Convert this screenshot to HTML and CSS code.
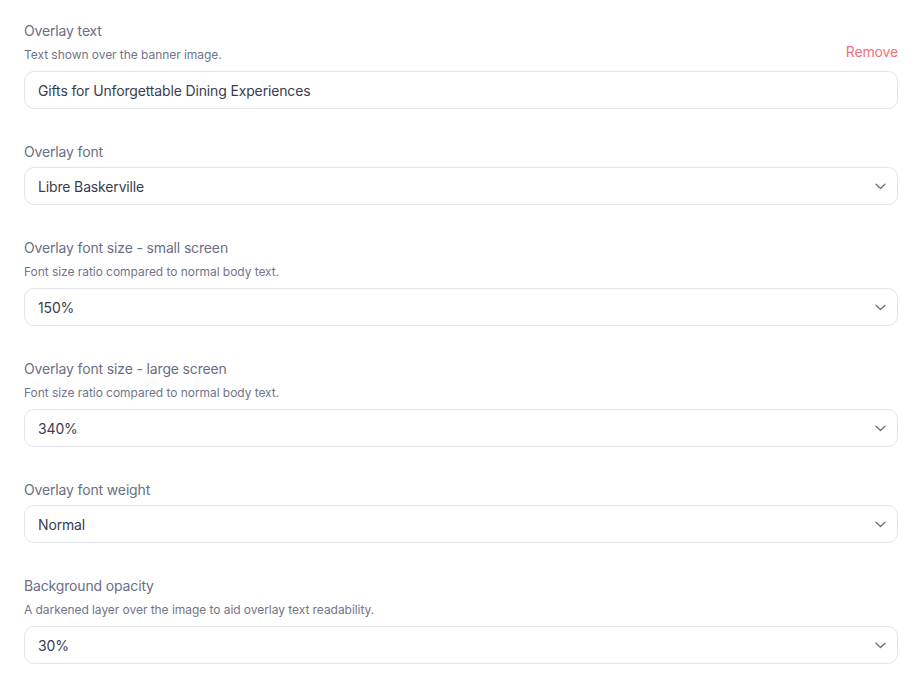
FILE: index.html
```html
<!DOCTYPE html>
<html lang="en">
<head>
<meta charset="utf-8">
<title>Overlay settings</title>
<link rel="stylesheet" href="styles.css">
</head>
<body>
<div class="form">
  <div class="field">
    <div class="field-head">
      <div class="head-text">
        <div class="label">Overlay text</div>
        <div class="desc">Text shown over the banner image.</div>
      </div>
      <button class="remove" type="button">Remove</button>
    </div>
    <div class="control">Gifts for Unforgettable Dining Experiences</div>
  </div>

  <div class="field">
    <div class="label">Overlay font</div>
    <div class="control select">Libre Baskerville
      <svg class="chev" width="11" height="7" viewBox="0 0 11 7"><path d="M1 1.2l4.5 4.3L10 1.2" fill="none" stroke="#6e7084" stroke-width="1.3" stroke-linecap="round" stroke-linejoin="round"/></svg>
    </div>
  </div>

  <div class="field">
    <div class="label">Overlay font size - small screen</div>
    <div class="desc">Font size ratio compared to normal body text.</div>
    <div class="control select">150%
      <svg class="chev" width="11" height="7" viewBox="0 0 11 7"><path d="M1 1.2l4.5 4.3L10 1.2" fill="none" stroke="#6e7084" stroke-width="1.3" stroke-linecap="round" stroke-linejoin="round"/></svg>
    </div>
  </div>

  <div class="field">
    <div class="label">Overlay font size - large screen</div>
    <div class="desc">Font size ratio compared to normal body text.</div>
    <div class="control select">340%
      <svg class="chev" width="11" height="7" viewBox="0 0 11 7"><path d="M1 1.2l4.5 4.3L10 1.2" fill="none" stroke="#6e7084" stroke-width="1.3" stroke-linecap="round" stroke-linejoin="round"/></svg>
    </div>
  </div>

  <div class="field">
    <div class="label">Overlay font weight</div>
    <div class="control select">Normal
      <svg class="chev" width="11" height="7" viewBox="0 0 11 7"><path d="M1 1.2l4.5 4.3L10 1.2" fill="none" stroke="#6e7084" stroke-width="1.3" stroke-linecap="round" stroke-linejoin="round"/></svg>
    </div>
  </div>

  <div class="field">
    <div class="label">Background opacity</div>
    <div class="desc">A darkened layer over the image to aid overlay text readability.</div>
    <div class="control select">30%
      <svg class="chev" width="11" height="7" viewBox="0 0 11 7"><path d="M1 1.2l4.5 4.3L10 1.2" fill="none" stroke="#6e7084" stroke-width="1.3" stroke-linecap="round" stroke-linejoin="round"/></svg>
    </div>
  </div>
</div>
</body>
</html>
```
FILE: styles.css
```css
* { box-sizing: border-box; }
html, body { margin: 0; padding: 0; background: #ffffff; }
body {
  font-family: Inter, "Noto Sans", "Liberation Sans", sans-serif;
  color: #3a3c50;
}
.form {
  display: flex;
  flex-direction: column;
  gap: 33px;
  padding: 21px 22px 0 24px;
}
.field {
  display: flex;
  flex-direction: column;
}
.field-head {
  display: flex;
  align-items: flex-end;
  justify-content: space-between;
}
.head-text {
  display: flex;
  flex-direction: column;
}
.label {
  font-size: 14px;
  line-height: 20px;
  color: #6b6e85;
  margin-bottom: 5px;
  letter-spacing: -0.15px;
}
.desc {
  font-size: 12px;
  line-height: 16px;
  color: #72758a;
  margin-top: 1px;
  margin-bottom: 8px;
  letter-spacing: -0.05px;
}
.remove {
  font-family: inherit;
  font-size: 14px;
  line-height: 20px;
  color: #f2707c;
  background: none;
  border: 0;
  padding: 0 0 9px 0;
  margin: 0;
  cursor: pointer;
  letter-spacing: -0.15px;
}
.control {
  height: 38px;
  border: 1px solid #e3e3ea;
  border-radius: 10px;
  padding: 0 11px 0 13px;
  display: flex;
  align-items: center;
  justify-content: space-between;
  font-size: 14px;
  color: #3a3c50;
  background: #fff;
  letter-spacing: -0.15px;
}
.chev { display: block; }
```
